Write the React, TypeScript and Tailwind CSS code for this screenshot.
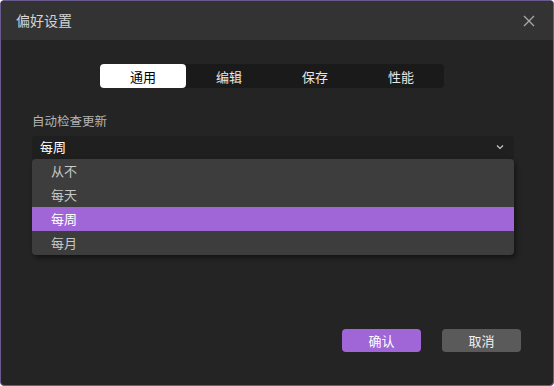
import React, { useState } from 'react';

const tabs = ['通用', '编辑', '保存', '性能'];
const options = ['从不', '每天', '每周', '每月'];

export default function App() {
  const [tab, setTab] = useState(0);
  const [value, setValue] = useState('每周');

  return (
    <div
      className="w-[554px] h-[386px] bg-[#242424] border border-[#6b5a8e] rounded-[4px] overflow-hidden flex flex-col"
      style={{ fontFamily: '"Noto Sans CJK SC", "Noto Sans", sans-serif' }}
    >
      <div className="h-[39px] shrink-0 bg-[#333333] flex items-center justify-between pl-[15px] pr-[18px]">
        <span className="text-[14px] text-[#d4d4d4]">偏好设置</span>
        <svg width="12" height="12" viewBox="0 0 12 12" className="text-[#a8a8a8]">
          <path d="M1 1L11 11M11 1L1 11" stroke="currentColor" strokeWidth="1.3" />
        </svg>
      </div>

      <div className="flex-1 flex flex-col px-[31px]">
        <div className="flex mt-[24px] pl-[68px]">
          <div className="flex w-[344px] h-[24px] bg-[#1a1a1a] rounded-[4px]">
            {tabs.map((t, i) => (
              <button
                key={t}
                onClick={() => setTab(i)}
                className={
                  'flex-1 text-[13px] leading-none rounded-[4px] ' +
                  (tab === i ? 'bg-white text-black' : 'text-[#e6e6e6]')
                }
              >
                {t}
              </button>
            ))}
          </div>
        </div>

        <div className="mt-[27px] text-[12.5px] text-[#b4b4b4] leading-none">自动检查更新</div>

        <div className="relative mt-[8px] w-[482px]">
          <div className="h-[23px] bg-[#1f1f1f] rounded-t-[4px] flex items-center justify-between pl-[8px] pr-[10px]">
            <span className="text-[13px] text-white">{value}</span>
            <svg width="8" height="6" viewBox="0 0 8 6" className="text-[#c8c8c8]">
              <path d="M1 1.5L4 4.5L7 1.5" stroke="currentColor" strokeWidth="1.2" fill="none" />
            </svg>
          </div>
          <div className="absolute left-0 right-0 top-[23px] bg-[#3d3d3d] rounded-[4px] shadow-[2px_3px_5px_rgba(0,0,0,0.45)] overflow-hidden">
            {options.map((o) => (
              <div
                key={o}
                onClick={() => setValue(o)}
                className={
                  'h-[24px] flex items-center pl-[19px] text-[13px] ' +
                  (value === o ? 'bg-[#a066d8] text-white' : 'text-[#c8c8c8]')
                }
              >
                {o}
              </div>
            ))}
          </div>
        </div>

        <div className="flex-1" />

        <div className="flex justify-end gap-[21px] pr-[1px] mb-[33px]">
          <button className="w-[79px] h-[23px] rounded-[4px] bg-[#a066d8] text-white text-[13px]">确认</button>
          <button className="w-[79px] h-[23px] rounded-[4px] bg-[#5a5a5a] text-[#f0f0f0] text-[13px]">取消</button>
        </div>
      </div>
    </div>
  );
}
